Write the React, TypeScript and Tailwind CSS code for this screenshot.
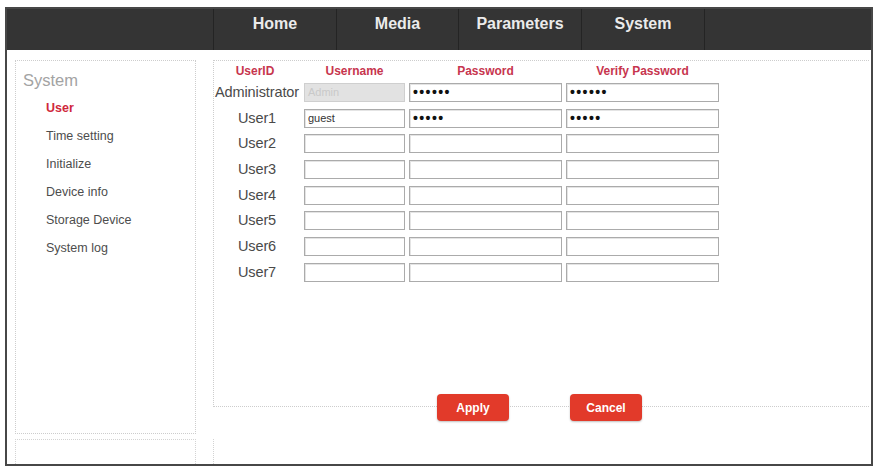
import React from "react";

const tabs = [
  { label: "Home", w: "w-[123px]" },
  { label: "Media", w: "w-[122px]" },
  { label: "Parameters", w: "w-[123px]" },
  { label: "System", w: "w-[124px] border-r" },
];

const menu = ["User", "Time setting", "Initialize", "Device info", "Storage Device", "System log"];

type Row = { id: string; user?: string; ph?: string; pw?: string; disabled?: boolean };

const rows: Row[] = [
  { id: "Administrator", ph: "Admin", pw: "••••••", disabled: true },
  { id: "User1", user: "guest", pw: "•••••" },
  { id: "User2" },
  { id: "User3" },
  { id: "User4" },
  { id: "User5" },
  { id: "User6" },
  { id: "User7" },
];

function Field({ w, text, dots, ph, disabled }: { w: string; text?: string; dots?: string; ph?: string; disabled?: boolean }) {
  return (
    <div
      className={`${w} h-[19px] border flex items-center pl-[3px] overflow-hidden ${
        disabled
          ? "bg-[#e2e2e2] border-[#cfcfcf]"
          : "bg-white border-[#ababab] shadow-[inset_1px_1px_0_#e4e4e4]"
      }`}
    >
      {dots ? (
        <span className="text-[14px] font-bold leading-[19px] tracking-[1.4px] text-[#111]">{dots}</span>
      ) : text ? (
        <span className="text-[11px] leading-[19px] text-[#333]">{text}</span>
      ) : ph ? (
        <span className="text-[11px] leading-[19px] text-[#c9c9c9]">{ph}</span>
      ) : null}
    </div>
  );
}

export default function App() {
  return (
    <div className="w-[879px] h-[471px] bg-white pt-[7px] pl-[5px] font-['Liberation_Sans',Arial,sans-serif]">
      <div className="w-[868px] h-[459px] border-2 border-[#474747] flex flex-col bg-white">
        <header className="h-[41px] bg-[#343434] flex shrink-0">
          <div className="w-[206px]" />
          {tabs.map((t) => (
            <div
              key={t.label}
              className={`${t.w} border-l border-[#242424] text-center text-[16px] leading-[18px] pt-[6px] font-bold text-[#ebebeb]`}
            >
              {t.label}
            </div>
          ))}
        </header>

        <div className="flex-1 flex pl-[8px] pt-[10px] min-h-0">
          {/* Sidebar */}
          <div className="w-[181px] flex flex-col">
            <div className="h-[374px] border border-dotted border-[#cdcdcd] pl-[7px] pt-[9px]">
              <div className="text-[16.5px] leading-[20px] text-[#a3a3a3]">System</div>
              <div className="mt-[4px] flex flex-col">
                {menu.map((m, i) => (
                  <div
                    key={m}
                    className={`h-[28px] leading-[28px] pl-[23px] text-[12.5px] ${
                      i === 0 ? "font-bold text-[#d0283c]" : "text-[#4d4d4d]"
                    }`}
                  >
                    {m}
                  </div>
                ))}
              </div>
            </div>
            <div className="mt-[5px] flex-1 border-x border-t border-dotted border-[#d3d3d3]" />
          </div>

          {/* Main */}
          <div className="flex-1 ml-[17px] mr-[2px] flex flex-col">
            <div className="h-[347px] border-l border-y border-dotted border-[#cdcdcd]">
              <div className="h-[20px] flex items-center text-[12px] font-bold text-[#c7354e]">
                <div className="w-[90px] text-center pr-[8px]">UserID</div>
                <div className="w-[101px] text-center">Username</div>
                <div className="w-[4px]" />
                <div className="w-[153px] text-center">Password</div>
                <div className="w-[4px]" />
                <div className="w-[153px] text-center">Verify Password</div>
              </div>
              <div className="mt-[2px] flex flex-col gap-[6.7px]">
                {rows.map((r) => (
                  <div key={r.id} className="flex items-center gap-[4px]">
                    <div className="w-[86px] text-center text-[14.5px] leading-[19px] text-[#4a4a4a] whitespace-nowrap tracking-[-0.1px]">
                      {r.id}
                    </div>
                    <Field w="w-[101px]" text={r.user} ph={r.ph} disabled={r.disabled} />
                    <Field w="w-[153px]" dots={r.pw} />
                    <Field w="w-[153px]" dots={r.pw} />
                  </div>
                ))}
              </div>
            </div>
            <div className="-mt-[13px] pl-[224px] flex gap-[61px]">
              <button className="w-[72px] h-[27px] rounded-[4px] bg-[#e23a2a] text-white text-[12px] font-bold shadow-[0_1px_2px_rgba(0,0,0,0.25)]">
                Apply
              </button>
              <button className="w-[72px] h-[27px] rounded-[4px] bg-[#e23a2a] text-white text-[12px] font-bold shadow-[0_1px_2px_rgba(0,0,0,0.25)]">
                Cancel
              </button>
            </div>
            <div className="mt-[18px] flex-1 border-l border-dotted border-[#d3d3d3]" />
          </div>
        </div>
      </div>
    </div>
  );
}
